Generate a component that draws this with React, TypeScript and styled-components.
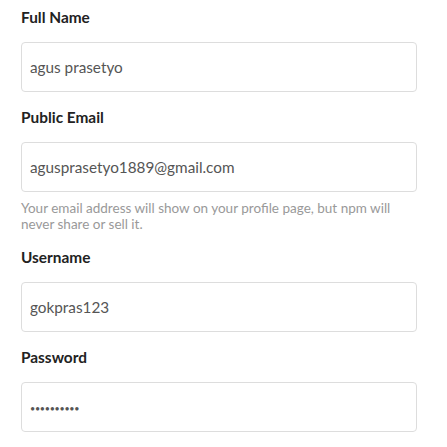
import React from "react";
import styled, { createGlobalStyle } from "styled-components";

const GlobalStyle = createGlobalStyle`
  html, body {
    margin: 0;
    padding: 0;
    background: #ffffff;
  }
  body {
    font-family: "Lato", "Liberation Sans", sans-serif;
  }
  * { box-sizing: border-box; }
`;

const Form = styled.form`
  display: flex;
  flex-direction: column;
  gap: 13px;
  width: 447px;
  padding: 5px 30px 0 21px;
`;

const Field = styled.div`
  display: flex;
  flex-direction: column;
  gap: 13px;
`;

const Label = styled.label`
  font-size: 15.4px;
  line-height: 24px;
  height: 24px;
  font-weight: 700;
  color: #222222;
`;

const Input = styled.input<{ $secret?: boolean }>`
  display: block;
  width: 100%;
  height: 50px;
  margin: 0;
  padding: ${(p) => (p.$secret ? "2px 8px 0" : "0 8px")};
  border: 1px solid #dddddd;
  border-radius: 4px;
  background: #ffffff;
  font-family: "Lato", "Liberation Sans", sans-serif;
  font-size: ${(p) => (p.$secret ? "9px" : "15.3px")};
  letter-spacing: ${(p) => (p.$secret ? "-0.3px" : "0")};
  color: #555555;
  outline: none;
`;

const Help = styled.p`
  margin: -5px 0 0;
  font-size: 13.5px;
  line-height: 16px;
  color: #999999;
`;

export default function App() {
  return (
    <>
      <GlobalStyle />
      <Form onSubmit={(e) => e.preventDefault()}>
        <Field>
          <Label>Full Name</Label>
          <Input readOnly value="agus prasetyo" />
        </Field>
        <Field>
          <Label>Public Email</Label>
          <Input readOnly value="agusprasetyo1889@gmail.com" />
          <Help>
            Your email address will show on your profile page, but npm will
            never share or sell it.
          </Help>
        </Field>
        <Field>
          <Label>Username</Label>
          <Input readOnly value="gokpras123" />
        </Field>
        <Field>
          <Label>Password</Label>
          <Input readOnly type="password" $secret value="abcdefghij" />
        </Field>
      </Form>
    </>
  );
}
